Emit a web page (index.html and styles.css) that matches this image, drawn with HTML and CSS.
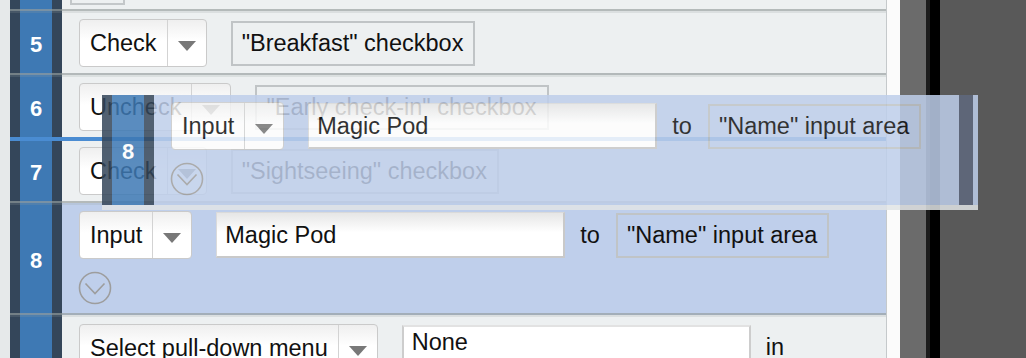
FILE: index.html
```html
<!DOCTYPE html>
<html>
<head>

<title>Test steps</title>

<link rel="stylesheet" href="styles.css">
</head>


<body>
<div class="page">

    <div class="list">

        <!-- fila de arriba, casi fuera de la vista -->
        <div class="row partial">
            <div class="num"></div>
            <div class="cells"><div class="stub"></div></div>
        </div>

        <div class="row">
            <div class="num">5</div>
            <div class="cells">
                <div class="select"><span class="label">Check</span><span class="arrow"><i></i></span></div>
                <div class="target">"Breakfast" checkbox</div>
            </div>
        </div>

        <div class="row drop">
            <div class="num">6</div>
            <div class="cells">
                <div class="select"><span class="label">Uncheck</span><span class="arrow"><i></i></span></div>
                <div class="target">"Early check-in" checkbox</div>
            </div>
        </div>

        <div class="row after-drop">
            <div class="num">7</div>
            <div class="cells">
                <div class="select"><span class="label">Check</span><span class="arrow"><i></i></span></div>
                <div class="target">"Sightseeing" checkbox</div>
            </div>
        </div>

        <div class="row selected">
            <div class="num">8</div>
            <div class="stack">
                <div class="cells">
                    <div class="select"><span class="label">Input</span><span class="arrow"><i></i></span></div>
                    <div class="field">Magic Pod</div>
                    <span class="word">to</span>
                    <div class="target">"Name" input area</div>
                </div>
                <svg class="more" width="34" height="34" viewBox="0 0 34 34">
                    <circle cx="17" cy="17" r="15.5" fill="none" stroke="#9d9d9d" stroke-width="1.6"/>
                    <polyline points="7.5,12.5 17,22.5 26.5,12.5" fill="none" stroke="#9d9d9d" stroke-width="1.6"/>
                </svg>
            </div>
        </div>

        <div class="row last">
            <div class="num"></div>
            <div class="cells">
                <div class="select"><span class="label">Select pull-down menu</span><span class="arrow"><i></i></span></div>
                <div class="field tall">None</div>
                <span class="word">in</span>
            </div>
        </div>

    </div>

    <div class="gutter"></div>
    <div class="rail"></div>
    <div class="edge"></div>

    <!-- copia de la fila 8 mientras se arrastra -->
    <div class="ghost">
        <div class="row selected">
            <div class="num">8</div>
            <div class="stack">
                <div class="cells">
                    <div class="select"><span class="label">Input</span><span class="arrow"><i></i></span></div>
                    <div class="field">Magic Pod</div>
                    <span class="word">to</span>
                    <div class="target">"Name" input area</div>
                </div>
                <svg class="more" width="34" height="34" viewBox="0 0 34 34">
                    <circle cx="17" cy="17" r="15.5" fill="none" stroke="#9d9d9d" stroke-width="1.6"/>
                    <polyline points="7.5,12.5 17,22.5 26.5,12.5" fill="none" stroke="#9d9d9d" stroke-width="1.6"/>
                </svg>
            </div>
        </div>
        <div class="ghost-foot"></div>
    </div>

</div>
</body>
</html>
```

FILE: styles.css
```css
body {
    margin: 0;
    background-color: #595959;
    font-family: "Liberation Sans", Arial, sans-serif;
    font-size: 23.5px;
    color: #111;
    overflow: hidden;
}

.page {
    position: relative;
    display: flex;
    height: 358px;
    overflow: hidden;
}

.list {
    width: 876px;
    flex: none;
    padding-left: 10px;
    background-color: #e6e9ea;
    border-right: 1px solid #c5c9cb;
}

.gutter {
    width: 13px;
    flex: none;
    background-color: #fbfbfb;
}

.rail {
    width: 26px;
    flex: none;
    background-color: #6b6b6b;
}

.edge {
    width: 10px;
    flex: none;
    background-color: #000;
    border-left: 4px solid #1c1c1c;
}

/* filas */
.row {
    display: flex;
    height: 60px;
    background: linear-gradient(to right, #34465a 10px, #3e79b4 10px, #3e79b4 42px, #34465a 42px, #34465a 52px, #edf0f1 52px);
    border-top: 2px solid rgba(150, 158, 158, 0.2);
    border-bottom: 2px solid rgba(150, 158, 158, 0.66);
}

.row.partial {
    margin-top: -51px;
    border-top: none;
}

.row.drop {
    border-bottom: 4px solid #4a8cd2;
}

.row.after-drop {
    border-top: none;
}

.row.selected {
    height: 108px;
    background: linear-gradient(to right, #34465a 10px, #3e79b4 10px, #3e79b4 42px, #34465a 42px, #34465a 52px, #bfcfeb 52px);
}

.row.last {
    height: 100px;
}

.num {
    width: 32px;
    margin: 0 10px;
    flex: none;
    display: flex;
    align-items: center;
    justify-content: center;
    padding-top: 3px;
    box-sizing: border-box;
    color: #fff;
    font-weight: bold;
    font-size: 22px;
}

.cells {
    display: flex;
    align-items: center;
    padding-left: 17px;
}

.row.partial .cells {
    align-items: flex-end;
    padding-left: 8px;
}

.stub {
    width: 55px;
    height: 50px;
    margin-bottom: 4px;
    box-sizing: border-box;
    border: 2px solid #c3c7c9;
    border-top: none;
}

.stack {
    display: flex;
    flex-direction: column;
    padding-top: 6px;
}

.row.last .cells {
    align-items: flex-start;
    padding-top: 7px;
}

.select {
    display: flex;
    height: 48px;
    box-sizing: border-box;
    margin-right: 24px;
    border: 1px solid #cacaca;
    border-radius: 4px;
    background: linear-gradient(#efefef, #fff 45%);
}

.select .label {
    padding: 0 10px;
    line-height: 46px;
}

.select .arrow {
    width: 38px;
    display: flex;
    align-items: center;
    justify-content: center;
    border-left: 1px solid #d3d3d3;
}

.select .arrow i {
    margin-top: 6px;
    border-left: 9px solid transparent;
    border-right: 9px solid transparent;
    border-top: 10px solid #787878;
}

.target {
    height: 45px;
    box-sizing: border-box;
    padding: 0 10px 0 9px;
    line-height: 41px;
    border: 2px solid #c0c4c6;
}

.field {
    width: 349px;
    height: 46px;
    box-sizing: border-box;
    margin-right: 15px;
    padding-left: 8px;
    line-height: 44px;
    background: linear-gradient(#e6e6e6, #fff 45%);
    border: 1px solid #dadada;
    border-right: 2px solid #c9c9c9;
    border-bottom: 2px solid #c9c9c9;
}

.field.tall {
    height: 60px;
    margin-top: 1px;
    line-height: 30px;
    background: #fff;
    border: 2px solid #cdcdcd;
    border-top-color: #e2e2e2;
}

.word {
    margin-right: 16px;
}

.row.last .word {
    padding-top: 10px;
}

.more {
    display: block;
    margin: 12px 0 0 16px;
}

/* fila arrastrada */
.ghost {
    position: absolute;
    left: 102px;
    top: 95px;
    width: 876px;
    opacity: 0.85;
}

.ghost .row {
    height: 110px;
    border: none;
}

.ghost .stack {
    padding-top: 7px;
}

.ghost-foot {
    height: 5px;
    background-color: #e2e5e7;
}

.ghost::after {
    content: "";
    position: absolute;
    top: 0;
    bottom: 5px;
    right: 5px;
    width: 14px;
    background-color: #5f697e;
}
```
